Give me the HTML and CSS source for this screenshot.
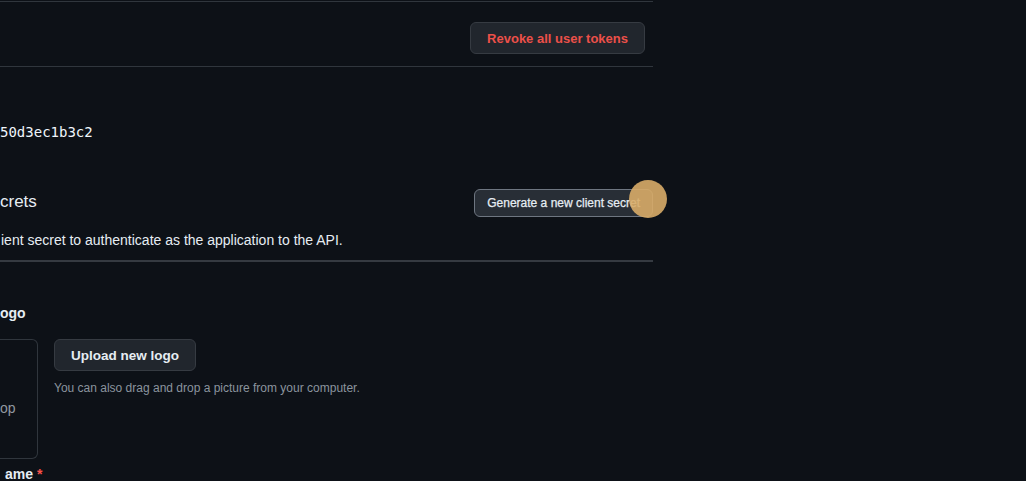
FILE: index.html
```html
<!DOCTYPE html>
<html lang="en">
<head>
<meta charset="utf-8">
<title>GitHub App settings</title>
<link rel="stylesheet" href="styles.css">
</head>
<body>
<div class="viewport">
  <main class="settings">
    <div class="box-row">
      <button class="btn btn-danger" type="button">Revoke all user tokens</button>
    </div>

    <div class="field">
      <code class="client-id">50d3ec1b3c2</code>
    </div>

    <div class="subhead">
      <h3 class="subhead-title">crets</h3>
      <button class="btn btn-sm btn-hover" type="button">Generate a new client secret</button>
    </div>
    <p class="note">ient secret to authenticate as the application to the API.</p>
    <div class="divider"></div>

    <div class="logo-field">
      <div class="label">ogo</div>
      <div class="logo-row">
        <div class="logo-drop">op</div>
        <div class="logo-actions">
          <button class="btn btn-upload" type="button">Upload new logo</button>
          <p class="hint">You can also drag and drop a picture from your computer.</p>
        </div>
      </div>
      <div class="label name-label">ame <span class="required">*</span></div>
    </div>
  </main>
  <span class="click-dot"></span>
</div>
</body>
</html>
```

FILE: styles.css
```css
* { box-sizing: border-box; }

html, body {
  margin: 0;
  padding: 0;
  background: #0d1117;
}

body {
  font-family: "Liberation Sans", Arial, sans-serif;
  color: #e6edf3;
  font-size: 14px;
  line-height: 20px;
}

.viewport {
  position: relative;
  width: 1026px;
  height: 481px;
  overflow: hidden;
  padding-top: 1px;
}

.settings {
  width: 653px;
}

.btn {
  display: inline-flex;
  align-items: center;
  justify-content: center;
  height: 32px;
  padding: 0 16px;
  border: 1px solid #363b42;
  border-radius: 6px;
  background: #21262d;
  color: #e6edf3;
  font-family: "Liberation Sans", Arial, sans-serif;
  font-size: 13px;
  font-weight: 700;
  white-space: nowrap;
  cursor: pointer;
}

.btn-danger {
  color: #ec5049;
}

.btn-sm {
  height: 28px;
  padding: 0 12px;
  font-size: 12px;
  font-weight: 400;
  -webkit-text-stroke: 0.25px #e6edf3;
}

.btn-hover {
  background: #282e36;
  border-color: #6e7681;
}

.btn-upload {
  font-size: 13.5px;
  padding: 0 16px;
}

.box-row {
  display: flex;
  justify-content: flex-end;
  border-top: 1px solid #30363d;
  border-bottom: 1px solid #30363d;
  padding: 20px 8px 12px 0;
}

.field {
  margin-top: 55px;
}

.client-id {
  display: block;
  font-family: "DejaVu Sans Mono", "Liberation Mono", monospace;
  font-size: 14px;
  line-height: 20px;
  color: #f0f6fc;
}

.subhead {
  display: flex;
  align-items: center;
  justify-content: space-between;
  margin-top: 47px;
  height: 28px;
}

.subhead-title {
  margin: 0 0 3px;
  font-size: 17px;
  font-weight: 400;
  line-height: 24px;
}

.note {
  margin: 13px 0 0 1px;
}

.divider {
  height: 2px;
  margin-top: 10px;
  background: #353a41;
}

.logo-field {
  padding-top: 41px;
}

.label {
  font-weight: 700;
}

.logo-row {
  display: flex;
  gap: 16px;
  margin-top: 16px;
}

.logo-drop {
  width: 38px;
  height: 120px;
  border: 1px solid #30363d;
  border-left: 0;
  border-radius: 0 6px 6px 0;
  padding-top: 59px;
  color: #9198a1;
  line-height: 18px;
}

.logo-actions {
  display: flex;
  flex-direction: column;
  align-items: flex-start;
}

.hint {
  margin: 8px 0 0;
  font-size: 12px;
  line-height: 18px;
  color: #8b949e;
}

.name-label {
  margin: 8px 0 0 5px;
  line-height: 14px;
}

.required {
  color: #f85149;
}

.click-dot {
  position: absolute;
  left: 629px;
  top: 180px;
  width: 38px;
  height: 38px;
  border-radius: 50%;
  background: rgba(216, 172, 104, 0.9);
}
```
